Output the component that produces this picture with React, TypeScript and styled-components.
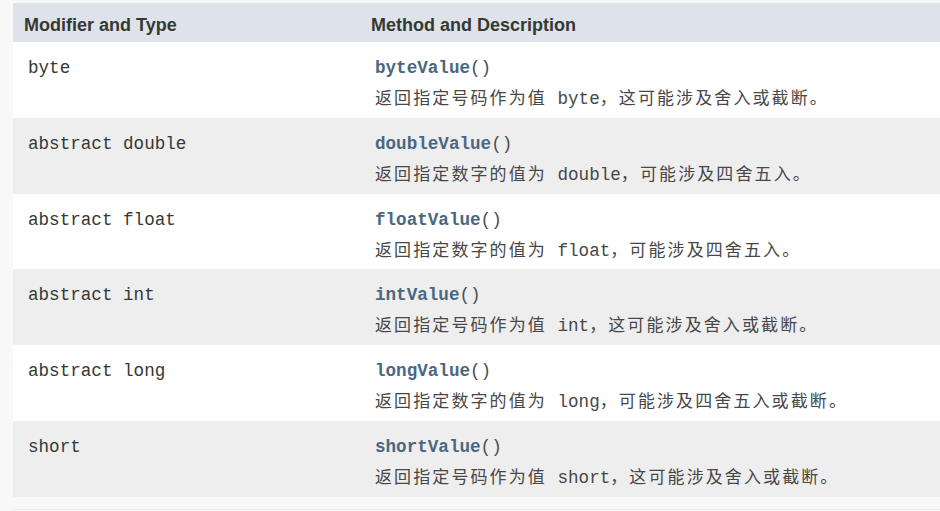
import styled, { createGlobalStyle } from "styled-components";

const GlobalStyle = createGlobalStyle`
  html, body {
    margin: 0;
    padding: 0;
    background: #f8f8f8;
  }
`;

const Page = styled.div`
  width: 940px;
  height: 511px;
  padding: 3px 0 0 13px;
  box-sizing: border-box;
  overflow: hidden;
  background: #f8f8f8;
`;

const Table = styled.table`
  width: 927px;
  border-collapse: collapse;
  border-spacing: 0;
`;

const HeadCell = styled.th<{ $first?: boolean }>`
  background: #dee3e9;
  color: #353833;
  font-family: "Liberation Sans", Arial, sans-serif;
  font-weight: bold;
  font-size: 18px;
  text-align: left;
  height: 39px;
  padding: 5px 0 0 11px;
  box-sizing: border-box;
  width: ${(p) => (p.$first ? "347px" : "auto")};
`;

const Row = styled.tr<{ $alt: boolean }>`
  background: ${(p) => (p.$alt ? "#eeeeef" : "#ffffff")};
`;

const Cell = styled.td`
  height: 75.8px;
  box-sizing: border-box;
  vertical-align: top;
  padding: 14px 0 0 15px;
  color: #353833;
  font-family: "Liberation Mono", "Courier New", "Noto Sans CJK SC", monospace;
  font-size: 17.6px;
  line-height: 25px;
`;

const MethodName = styled.div`
  color: #4a6782;
  font-weight: bold;
  font-family: "Liberation Mono", "Courier New", monospace;
`;

const Parens = styled.span`
  font-weight: normal;
  color: #4d4d4d;
`;

const Desc = styled.div`
  margin-top: 3px;
  color: #474747;
  font-family: "Liberation Mono", "Courier New", "Noto Sans CJK SC", monospace;
  white-space: nowrap;
`;

const Cjk = styled.span`
  font-family: "Noto Sans CJK SC", sans-serif;
  font-size: 17px;
  letter-spacing: 2.1px;
`;

const Footer = styled.div`
  margin-top: 12px;
  border-top: 1px solid #ededed;
`;

const rows = [
  { type: "byte", name: "byteValue", pre: "返回指定号码作为值", kw: "byte", post: "，这可能涉及舍入或截断。" },
  { type: "abstract double", name: "doubleValue", pre: "返回指定数字的值为", kw: "double", post: "，可能涉及四舍五入。" },
  { type: "abstract float", name: "floatValue", pre: "返回指定数字的值为", kw: "float", post: "，可能涉及四舍五入。" },
  { type: "abstract int", name: "intValue", pre: "返回指定号码作为值", kw: "int", post: "，这可能涉及舍入或截断。" },
  { type: "abstract long", name: "longValue", pre: "返回指定数字的值为", kw: "long", post: "，可能涉及四舍五入或截断。" },
  { type: "short", name: "shortValue", pre: "返回指定号码作为值", kw: "short", post: "，这可能涉及舍入或截断。" },
];

export default function App() {
  return (
    <Page>
      <GlobalStyle />
      <Table>
        <thead>
          <tr>
            <HeadCell $first>Modifier and Type</HeadCell>
            <HeadCell>Method and Description</HeadCell>
          </tr>
        </thead>
        <tbody>
          {rows.map((r, i) => (
            <Row key={r.name} $alt={i % 2 === 1}>
              <Cell>{r.type}</Cell>
              <Cell>
                <MethodName>
                  {r.name}
                  <Parens>()</Parens>
                </MethodName>
                <Desc>
                  <Cjk>{r.pre}</Cjk> {r.kw}
                  <Cjk>{r.post}</Cjk>
                </Desc>
              </Cell>
            </Row>
          ))}
        </tbody>
      </Table>
      <Footer />
    </Page>
  );
}
